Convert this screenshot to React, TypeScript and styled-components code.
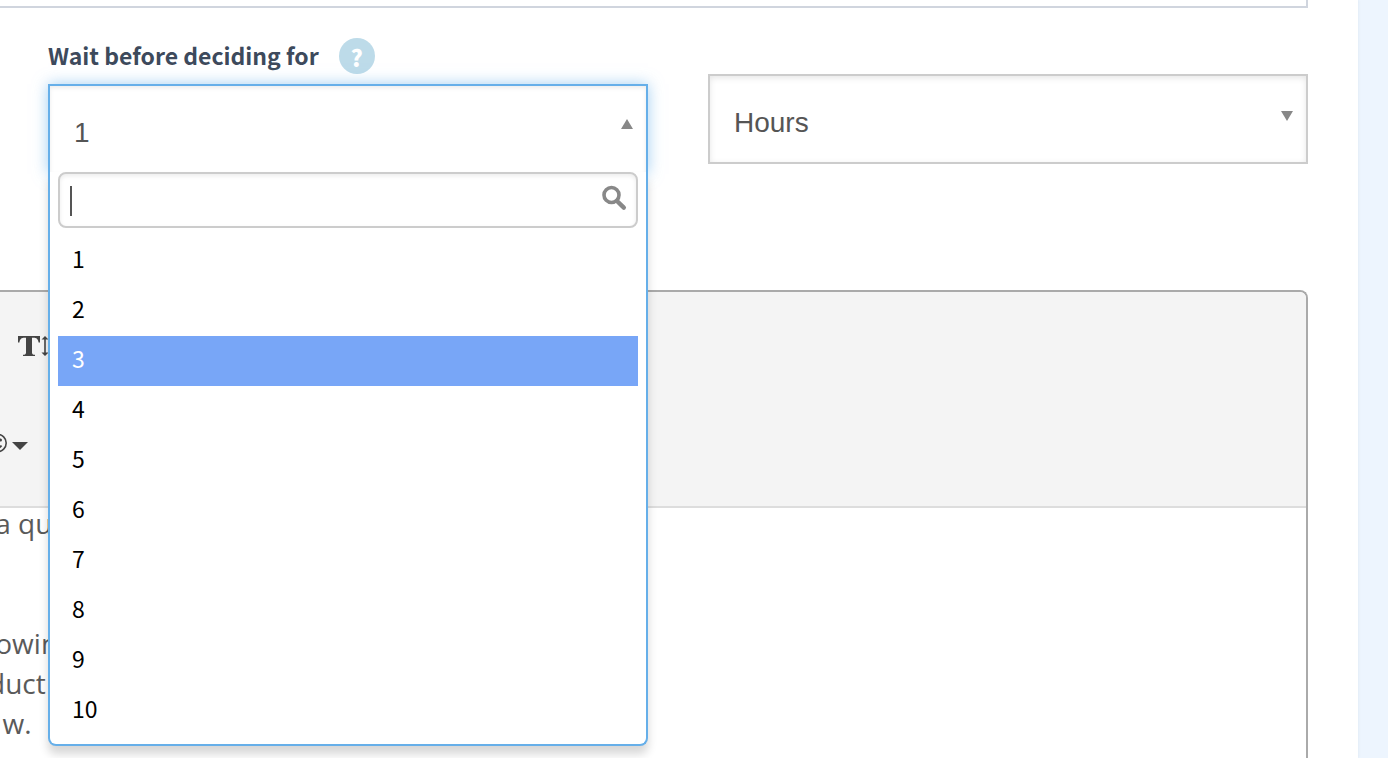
import React from "react";
import styled, { createGlobalStyle } from "styled-components";

const GlobalStyle = createGlobalStyle`
  *, *::before, *::after { box-sizing: border-box; }
  body {
    margin: 0;
    background: #edf5fe;
    font-family: "Noto Sans CJK SC", "Noto Sans", sans-serif;
  }
`;

const Page = styled.div`
  display: flex;
  height: 100vh;
  padding-right: 30px;
  overflow: hidden;
`;

const Panel = styled.main`
  flex: 1;
  display: flex;
  flex-direction: column;
  padding-right: 50px;
  background: #fff;
  box-shadow: 0 0 3px rgba(60, 80, 110, 0.1);
`;

const PreviousField = styled.div`
  flex: none;
  height: 8px;
  border: solid #d0d5de;
  border-width: 0 2px 2px 0;
`;

const FieldRow = styled.div`
  flex: none;
  display: grid;
  grid-template-columns: 1fr 1fr;
  gap: 60px;
  padding: 30px 0 116px 48px;
`;

const Field = styled.div<{ $offset?: boolean }>`
  display: flex;
  flex-direction: column;
  gap: 10px;
  padding-top: ${(p) => (p.$offset ? "36px" : "0")};
`;

const LabelRow = styled.div`
  display: flex;
  align-items: flex-start;
  gap: 20px;
  height: 36px;
`;

const Label = styled.label`
  color: #3d4a5c;
  font-size: 23px;
  font-weight: 700;
  line-height: 34px;
  white-space: nowrap;
`;

const HelpButton = styled.button`
  width: 36px;
  height: 36px;
  padding: 2px 0 0;
  border: 0;
  border-radius: 50%;
  background: #bddbe9;
  color: #fff;
  font-family: inherit;
  font-size: 23px;
  font-weight: 900;
  line-height: 34px;
`;

const SelectShell = styled.div`
  position: relative;
  height: 90px;
`;

const NativeSelect = styled.select`
  appearance: none;
  width: 100%;
  height: 100%;
  padding: 6px 48px 0 24px;
  border: 2px solid #ccc;
  border-radius: 0;
  background: #fff;
  box-shadow: inset 0 2px 6px rgba(0, 0, 0, 0.1);
  color: #555;
  font-family: "Liberation Sans", Arial, sans-serif;
  font-size: 28px;
`;

const OpenSelect = styled.button`
  width: 100%;
  height: 100%;
  padding: 6px 48px 0 24px;
  border: solid #66afe9;
  border-width: 2px 2px 0;
  background: #fff;
  box-shadow: inset 0 2px 4px rgba(0, 0, 0, 0.08), 0 0 14px rgba(102, 175, 233, 0.6);
  color: #555;
  font-family: "Liberation Sans", Arial, sans-serif;
  font-size: 28px;
  text-align: left;
`;

const Arrow = styled.svg`
  position: absolute;
  top: 35px;
  right: 14px;
  width: 14px;
  height: 12px;
  fill: #888;
  pointer-events: none;
`;

const Menu = styled.div`
  position: absolute;
  z-index: 2;
  top: 88px;
  left: 0;
  right: 0;
  padding: 0 8px 8px;
  border: solid #66afe9;
  border-width: 0 2px 2px;
  border-radius: 0 0 8px 8px;
  background: #fff;
  box-shadow: 0 8px 10px rgba(0, 0, 0, 0.16);
`;

const SearchBox = styled.div`
  position: relative;
  height: 56px;
`;

const SearchInput = styled.input`
  width: 100%;
  height: 56px;
  padding: 0 40px 0 12px;
  border: 2px solid #ccc;
  border-radius: 8px;
  outline: 0;
  background: #fff;
  box-shadow: inset 0 2px 4px rgba(0, 0, 0, 0.08);
  color: #555;
  font-size: 26px;
`;

const TextCursor = styled.span`
  position: absolute;
  top: 14px;
  left: 12px;
  width: 2px;
  height: 30px;
  background: #555;
`;

const SearchIcon = styled.svg`
  position: absolute;
  top: 13px;
  right: 11px;
  width: 26px;
  height: 26px;
  fill: none;
  stroke: #888;
`;

const Options = styled.ul`
  margin: 0;
  padding: 8px 0 0;
  list-style: none;
`;

const Option = styled.li<{ $active: boolean }>`
  height: 50px;
  padding: 0 14px;
  background: ${(p) => (p.$active ? "#78a6f7" : "transparent")};
  color: ${(p) => (p.$active ? "#fff" : "#000")};
  font-size: 23px;
  line-height: 44px;
`;

const Editor = styled.section`
  flex: 1;
  min-height: 0;
  display: flex;
  flex-direction: column;
  border: solid #aaa;
  border-width: 2px 2px 0 0;
  border-radius: 0 8px 0 0;
  overflow: hidden;
`;

const Toolbar = styled.div`
  flex: none;
  height: 216px;
  display: flex;
  flex-direction: column;
  padding-top: 5px;
  border-bottom: 2px solid #ddd;
  background: #f4f4f4;
`;

const ToolRow = styled.div<{ $indent?: boolean }>`
  height: 98px;
  display: flex;
  align-items: center;
  padding-left: ${(p) => (p.$indent ? "18px" : "0")};
`;

const ToolButton = styled.button`
  display: flex;
  padding: 0;
  border: 0;
  background: none;
  color: #444;
`;

const Document = styled.div`
  flex: 1;
  min-height: 0;
  overflow: hidden;
  background: #fff;
`;

const Copy = styled.div`
  margin: -5px 0 0 -12px;
  color: #5a5a5a;
  font-family: "Open Sans", "Noto Sans", sans-serif;
  font-size: 28px;
  line-height: 40px;
  white-space: pre;
`;

const Paragraph = styled.p`
  margin: 0 0 80px;
`;

const values = ["1", "2", "3", "4", "5", "6", "7", "8", "9", "10"];

export default function App() {
  return (
    <>
      <GlobalStyle />
      <Page>
        <Panel>
          <PreviousField />
          <FieldRow>
            <Field>
              <LabelRow>
                <Label htmlFor="wait-amount">Wait before deciding for</Label>
                <HelpButton type="button" aria-label="Help">?</HelpButton>
              </LabelRow>
              <SelectShell>
                <OpenSelect id="wait-amount" type="button" aria-haspopup="listbox" aria-expanded="true">
                  1
                </OpenSelect>
                <Arrow viewBox="0 0 14 12" aria-hidden="true">
                  <path d="M7 0 13 10H1Z" />
                </Arrow>
                <Menu>
                  <SearchBox>
                    <SearchInput type="text" aria-label="Search values" />
                    <TextCursor />
                    <SearchIcon viewBox="0 0 26 26" aria-hidden="true">
                      <circle cx="10.500" cy="10" r="7.500" strokeWidth="3.600" />
                      <path d="M16 16 22.800 22.600" strokeWidth="4.400" strokeLinecap="round" />
                    </SearchIcon>
                  </SearchBox>
                  <Options role="listbox" aria-label="Wait before deciding for">
                    {values.map((v) => (
                      <Option key={v} role="option" aria-selected={v === "3"} $active={v === "3"}>
                        {v}
                      </Option>
                    ))}
                  </Options>
                </Menu>
              </SelectShell>
            </Field>
            <Field $offset>
              <SelectShell>
                <NativeSelect aria-label="Wait unit" defaultValue="Hours">
                  <option>Hours</option>
                </NativeSelect>
                <Arrow viewBox="0 0 14 12" aria-hidden="true">
                  <path d="M1 2H13L7 12Z" />
                </Arrow>
              </SelectShell>
            </Field>
          </FieldRow>
          <Editor>
            <Toolbar>
              <ToolRow $indent>
                <ToolButton type="button" aria-label="Font size">
                  <svg width="36" height="24" viewBox="0 0 36 24" fill="currentColor">
                    <path d="M0 2H22V8.500H20.600C20 5 18.500 3.700 15.500 3.700H14V18.500C14 20.300 14.800 20.700 17 20.800V22H5V20.800C7.200 20.700 8 20.300 8 18.500V3.700H6.500C3.500 3.700 2 5 1.400 8.500H0Z" />
                    <path d="M27 2 30.500 5.500H27.800V18.500H30.500L27 22 23.500 18.500H26.200V5.500H23.500Z" />
                  </svg>
                </ToolButton>
              </ToolRow>
              <ToolRow>
                <ToolButton type="button" aria-label="Emoticons">
                  <svg width="28" height="20" viewBox="0 0 28 20">
                    <circle cx="-2.500" cy="9" r="8.700" fill="none" stroke="currentColor" strokeWidth="1.600" />
                    <circle cx="0.500" cy="6" r="1.500" fill="currentColor" />
                    <path d="M-6 11Q-2 16 1.500 11.500" fill="none" stroke="currentColor" strokeWidth="2" />
                    <path d="M12 8H28L20 16Z" fill="currentColor" />
                  </svg>
                </ToolButton>
              </ToolRow>
            </Toolbar>
            <Document>
              <Copy>
                <Paragraph>{" a qu"}</Paragraph>
                <Paragraph>{" owin\nduct\n  w."}</Paragraph>
              </Copy>
            </Document>
          </Editor>
        </Panel>
      </Page>
    </>
  );
}
